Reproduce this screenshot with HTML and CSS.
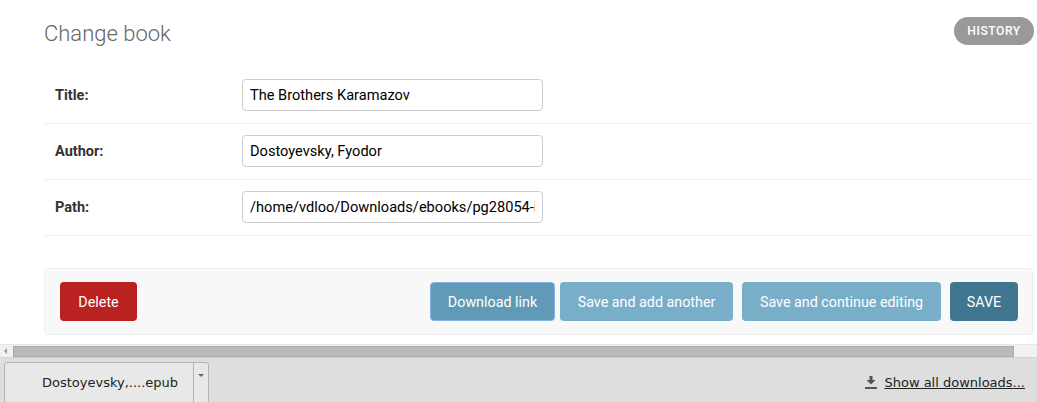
FILE: index.html
```html
<!DOCTYPE html>
<html lang="en">
<head>
<meta charset="utf-8">
<title>Change book</title>
<link rel="stylesheet" href="styles.css">
</head>
<body>
<div class="viewport">
  <main class="content">
    <div class="header">
      <h1 class="title">Change book</h1>
      <a class="history" href="#">History</a>
    </div>
    <form class="form">
      <fieldset class="fieldset">
        <div class="form-row">
          <label class="label">Title:</label>
          <input class="field" type="text" value="The Brothers Karamazov">
        </div>
        <div class="form-row">
          <label class="label">Author:</label>
          <input class="field" type="text" value="Dostoyevsky, Fyodor">
        </div>
        <div class="form-row">
          <label class="label">Path:</label>
          <input class="field" type="text" value="/home/vdloo/Downloads/ebooks/pg28054-images.epub">
        </div>
      </fieldset>
      <div class="submit-row">
        <a class="btn btn-delete" href="#">Delete</a>
        <div class="spacer"></div>
        <a class="btn btn-download" href="#">Download link</a>
        <a class="btn btn-light btn-add" href="#">Save and add another</a>
        <a class="btn btn-light btn-continue" href="#">Save and continue editing</a>
        <a class="btn btn-save" href="#">SAVE</a>
      </div>
    </form>
  </main>
  <div class="hscroll">
    <span class="hscroll-arrow"></span>
    <div class="hscroll-track"><div class="hscroll-thumb"></div></div>
  </div>
  <div class="downloads">
    <div class="dl-item">
      <span class="dl-name">Dostoyevsky,....epub</span>
      <span class="dl-menu"><span class="dl-caret"></span></span>
    </div>
    <a class="show-all" href="#">
      <svg class="show-all-icon" width="14" height="13" viewBox="0 0 14 13">
        <path d="M5.5 0 H8.5 V4 H11.5 L7 8.5 L2.5 4 H5.5 Z" fill="#555"/>
        <rect x="1" y="11" width="12" height="2" fill="#555"/>
      </svg>
      <span class="show-all-text">Show all downloads...</span>
    </a>
  </div>
</div>
</body>
</html>
```
FILE: styles.css
```css
* { box-sizing: border-box; }
html, body { margin: 0; padding: 0; background: #fff; }
body { font-family: Roboto, "Liberation Sans", sans-serif; color: #333; }

.viewport {
  width: 1037px;
  height: 402px;
  display: flex;
  flex-direction: column;
  overflow: hidden;
}

.content {
  flex: 1;
  overflow: hidden;
  padding: 0 4px 0 44px;
}

.header {
  display: flex;
  justify-content: space-between;
  align-items: flex-start;
  padding-top: 17px;
  margin-right: -1px;
}
.title {
  margin: 3px 0 0;
  font-size: 22px;
  line-height: 28px;
  font-weight: 300;
  color: #666;
}
.history {
  display: flex;
  align-items: center;
  justify-content: center;
  width: 80px;
  height: 28px;
  border-radius: 15px;
  background: #999;
  color: #fff;
  font-size: 12.1px;
  font-weight: 500;
  letter-spacing: 0.55px;
  text-transform: uppercase;
  text-decoration: none;
}

.form { margin-top: 20px; }
.fieldset { border: 0; margin: 0; padding: 0; }
.form-row {
  display: flex;
  align-items: center;
  padding: 11px 11px 12px;
  border-bottom: 1px solid #eee;
}
.label {
  width: 187px;
  font-size: 14.5px;
  font-weight: 700;
  color: #333;
}
.field {
  width: 301px;
  height: 32px;
  border: 1px solid #ccc;
  border-radius: 4px;
  padding: 0 7px;
  font-family: Roboto, "Liberation Sans", sans-serif;
  font-size: 14.6px;
  color: #000;
  background: #fff;
}

.submit-row {
  display: flex;
  align-items: center;
  margin-top: 32px;
  padding: 13px 14px 13px 15px;
  background: #f8f8f8;
  border: 1px solid #eee;
  border-radius: 4px;
}
.spacer { flex: 1; }
.btn {
  display: flex;
  align-items: center;
  justify-content: center;
  height: 39px;
  padding: 0 10px;
  border-radius: 4px;
  color: #fff;
  font-size: 14.3px;
  text-decoration: none;
  margin-left: 9px;
  white-space: nowrap;
}
.btn-delete { background: #ba2121; width: 77px; margin-left: 0; }
.btn-download {
  background: #609ab6;
  border: 1px solid #86b3e6;
  width: 125px;
  margin-left: 0;
}
.btn-light { background: #79aec8; }
.btn-add { margin-left: 5px; width: 173px; }
.btn-continue { width: 199px; }
.btn-save { background: #417690; width: 68px; }

.hscroll {
  height: 14px;
  flex: none;
  display: flex;
  align-items: center;
  background: #f1f1f1;
  border-top: 1px solid #e6e6e6;
  border-bottom: 1px solid #d4d4d4;
}
.hscroll-arrow {
  width: 0;
  height: 0;
  margin: 0 6px 0 4px;
  border-top: 3px solid transparent;
  border-bottom: 3px solid transparent;
  border-right: 3px solid #9a9a9a;
}
.hscroll-track { flex: 1; height: 100%; padding-right: 23px; display: flex; align-items: center; }
.hscroll-thumb {
  flex: 1;
  height: 11px;
  background: #bababa;
  border: 1px solid #a9a9a9;
}

.downloads {
  height: 44px;
  flex: none;
  background: #dedede;
  display: flex;
  align-items: flex-start;
  justify-content: space-between;
  padding: 4px 12px 0 4px;
  font-family: "DejaVu Sans", sans-serif;
  font-size: 13px;
  color: #222;
}
.dl-item {
  width: 205px;
  height: 42px;
  display: flex;
  background: #e8e8e8;
  border: 1px solid #b2b2b2;
  border-radius: 3px;
}
.dl-name {
  flex: 1;
  padding: 12px 0 0 37px;
}
.dl-menu {
  width: 15px;
  border-left: 1px solid #b2b2b2;
  display: flex;
  justify-content: center;
  padding-top: 11px;
}
.dl-caret {
  width: 0;
  height: 0;
  border-left: 3px solid transparent;
  border-right: 3px solid transparent;
  border-top: 3px solid #666;
}
.show-all {
  display: flex;
  align-items: center;
  gap: 6px;
  margin-top: 13px;
  color: #222;
  text-decoration: none;
}
.show-all-icon { display: block; }
.show-all-text { text-decoration: underline; }
```
